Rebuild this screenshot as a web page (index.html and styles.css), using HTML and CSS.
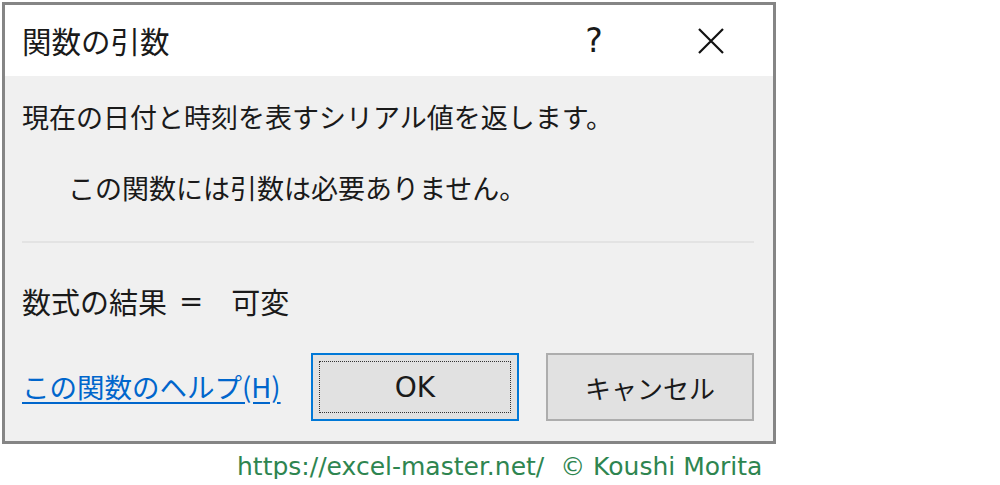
FILE: index.html
```html
<!DOCTYPE html>
<html lang="ja">
<head>
<meta charset="utf-8">
<link rel="stylesheet" href="styles.css">
</head>
<body>
<div class="dialog">
  <div class="titlebar">
    <span class="title">関数の引数</span>
    <span class="help-btn">?</span>
    <span class="close-btn">
      <svg width="28" height="28" viewBox="0 0 28 28"><path d="M2 2 L26 26 M26 2 L2 26" stroke="#111" stroke-width="2.2" fill="none"/></svg>
    </span>
  </div>
  <div class="content">
    <div class="desc">現在の日付と時刻を表すシリアル値を返します。</div>
    <div class="note">この関数には引数は必要ありません。</div>
    <div class="sep"></div>
    <div class="result"><span>数式の結果</span><span class="eq">=</span><span class="val">可変</span></div>
    <div class="footer">
      <a class="helplink" href="#">この関数のヘルプ(H)</a>
      <div class="buttons">
        <div class="btn ok"><div class="focus">OK</div></div>
        <div class="btn cancel">キャンセル</div>
      </div>
    </div>
  </div>
</div>
<div class="credit">https://excel-master.net/&nbsp;&nbsp;© Koushi Morita</div>
</body>
</html>
```
FILE: styles.css
```css
html, body {
  margin: 0;
  padding: 0;
  background: #ffffff;
}
body {
  font-family: "Noto Sans CJK JP", "Noto Sans", sans-serif;
  color: #1a1a1a;
}
.dialog {
  margin: 2px 0 0 2px;
  width: 768px;
  height: 436px;
  border: 3px solid #858585;
  background: #f0f0f0;
  display: flex;
  flex-direction: column;
}
.titlebar {
  height: 71px;
  background: #ffffff;
  display: flex;
  align-items: center;
}
.title {
  margin-left: 17px;
  font-size: 29.5px;
  line-height: 1;
  flex: 1;
}
.help-btn {
  font-family: "DejaVu Sans", sans-serif;
  font-size: 33px;
  width: 30px;
  text-align: center;
  margin-right: 88px;
}
.close-btn {
  width: 28px;
  height: 28px;
  margin-right: 48px;
  display: flex;
}
.content {
  flex: 1;
  padding: 0 19px 0 17px;
  display: flex;
  flex-direction: column;
}
.desc {
  font-size: 27px;
  line-height: 1;
  margin-top: 27px;
}
.note {
  font-size: 27px;
  line-height: 1;
  margin-top: 44px;
  padding-left: 46px;
}
.sep {
  height: 2px;
  background: #e3e3e3;
  margin-top: 40px;
}
.result {
  font-size: 29px;
  line-height: 1;
  margin-top: 44px;
  display: flex;
}
.eq {
  margin-left: 12px;
  font-family: "DejaVu Sans", sans-serif;
}
.val {
  margin-left: 28px;
}
.footer {
  margin-top: 37px;
  display: flex;
  align-items: center;
  justify-content: space-between;
}
.helplink {
  color: #0066cc;
  font-size: 27.5px;
  line-height: 1;
  text-decoration: underline;
  text-underline-offset: 4px;
}
.buttons {
  display: flex;
  gap: 27px;
}
.btn {
  box-sizing: border-box;
  width: 208px;
  height: 68px;
  background: #e1e1e1;
  display: flex;
  align-items: center;
  justify-content: center;
  font-size: 26px;
}
.ok {
  border: 2px solid #0078d7;
  padding: 6px;
}
.focus {
  box-sizing: border-box;
  width: 100%;
  height: 100%;
  border: 1px dotted #333;
  display: flex;
  align-items: center;
  justify-content: center;
  font-family: "DejaVu Sans", sans-serif;
  font-size: 28px;
}
.cancel {
  border: 2px solid #adadad;
}
.credit {
  margin: 10px 0 0 237px;
  font-family: "DejaVu Sans", sans-serif;
  font-size: 25px;
  line-height: 1;
  color: #2e8550;
}
```
